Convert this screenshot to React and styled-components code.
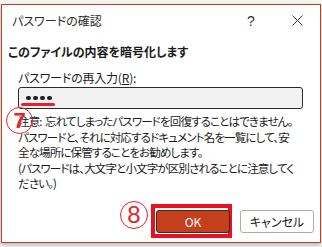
import styled, { createGlobalStyle } from "styled-components";

const Global = createGlobalStyle`
  html, body {
    margin: 0;
    padding: 0;
    background: #fff;
  }
  body {
    font-family: "Noto Sans CJK JP", "Noto Sans", sans-serif;
    font-feature-settings: "palt";
    color: #1a1a1a;
  }
`

const Page = styled.div`
  width: 322px;
  height: 247px;
  padding: 4px 0 0 1px;
  box-sizing: border-box;
  background: #f4f4f4;
`

const Dialog = styled.div`
  position: relative;
  width: 320px;
  height: 239px;
  box-sizing: border-box;
  border: 1px solid #c4401c;
  background: #fff;
  box-shadow: 0 2px 4px rgba(0,0,0,0.25);
  display: flex;
  flex-direction: column;
`

const TitleBar = styled.div`
  height: 31px;
  display: flex;
  align-items: center;
  padding-left: 10px;
  font-size: 12px;
  color: #2b2b2b;
`

const Title = styled.div`
  flex: 1;
`

const TitleBtn = styled.div`
  width: 46px;
  height: 31px;
  display: flex;
  align-items: center;
  justify-content: center;
  font-size: 14px;
  color: #333;
  font-family: "Liberation Sans", sans-serif;
`

const Content = styled.div`
  padding: 8px 6px 0 6px;
  display: flex;
  flex-direction: column;
`

const Heading = styled.div`
  font-size: 12px;
  font-weight: bold;
  line-height: 16px;
`

const Field = styled.div`
  margin: 10px 0 0 10px;
  display: flex;
  flex-direction: column;
`

const Label = styled.div`
  font-size: 12px;
  line-height: 16px;
  letter-spacing: -0.2px;
  u { text-decoration: underline; text-underline-offset: 1px; }
`

const Input = styled.div`
  position: relative;
  margin-top: 1px;
  width: 285px;
  height: 22px;
  box-sizing: border-box;
  border: 1px solid #2a2a2a;
  border-radius: 3px;
  background: #f2f2f2;
  display: flex;
  align-items: center;
  gap: 2.5px;
  padding-left: 7px;
`

const Dot = styled.span`
  width: 4.5px;
  height: 4.5px;
  border-radius: 50%;
  background: #222;
`

const Mark = styled.div`
  position: absolute;
  left: 2px;
  top: 15px;
  width: 34px;
  height: 3px;
  border-radius: 2px;
  background: #e8202a;
`

const Note = styled.div`
  margin-top: 5px;
  font-size: 11.5px;
  line-height: 15.5px;
  letter-spacing: -0.85px;
  white-space: nowrap;
`

const Circle = styled.div`
  position: ${p => (p.$float ? "absolute" : "static")};
  left: ${p => (p.$float ? "4px" : "auto")};
  top: ${p => (p.$float ? "102px" : "auto")};
  width: ${p => p.$size}px;
  height: ${p => p.$size}px;
  box-sizing: border-box;
  border: 1.2px solid #e8202a;
  border-radius: 50%;
  display: flex;
  align-items: center;
  justify-content: center;
  color: #e8202a;
  font-family: "Liberation Sans", sans-serif;
  font-size: ${p => p.$font}px;
  font-weight: ${p => (p.$float ? "bold" : "normal")};
  line-height: 1;
`

const Buttons = styled.div`
  margin-top: auto;
  padding: 0 6px 4px 0;
  display: flex;
  justify-content: flex-end;
  align-items: flex-end;
`

const Highlight = styled.div`
  width: 81px;
  height: 34px;
  box-sizing: border-box;
  border: 4px solid #e81123;
  padding: 2px 0 0 1px;
  margin: 0 8px 0 3px;
`

const Button = styled.div`
  width: ${p => p.$w}px;
  height: 23px;
  box-sizing: border-box;
  border-radius: 3px;
  border: 1px solid ${p => (p.$primary ? "#3a2a20" : "#adadad")};
  background: ${p => (p.$primary ? "#c4401c" : "#fff")};
  color: ${p => (p.$primary ? "#fff" : "#1a1a1a")};
  display: flex;
  align-items: center;
  justify-content: center;
  font-size: 12px;
  margin-bottom: ${p => (p.$primary ? "0" : "5px")};
`

export default function App() {
  return (
    <Page>
      <Global />
      <Dialog>
        <TitleBar>
          <Title>パスワードの確認</Title>
          <TitleBtn>?</TitleBtn>
          <TitleBtn>
            <svg width="11" height="11" viewBox="0 0 11 11">
              <path d="M0.5 0.5 L10.5 10.5 M10.5 0.5 L0.5 10.5" stroke="#333" strokeWidth="1" />
            </svg>
          </TitleBtn>
        </TitleBar>
        <Content>
          <Heading>このファイルの内容を暗号化します</Heading>
          <Field>
            <Label>パスワードの再入力(<u>R</u>):</Label>
            <Input>
              <Dot /><Dot /><Dot /><Dot />
              <Mark />
            </Input>
            <Note>
              注意:&nbsp; 忘れてしまったパスワードを回復することはできません。<br />
              パスワードと、それに対応するドキュメント名を一覧にして、安<br />
              全な場所に保管することをお勧めします。<br />
              (パスワードは、大文字と小文字が区別されることに注意してく<br />
              ださい。)
            </Note>
          </Field>
        </Content>
        <Circle $float $size={27} $font={22}>7</Circle>
        <Buttons>
          <Circle $size={28} $font={24} style={{ marginBottom: 9 }}>8</Circle>
          <Highlight>
            <Button $primary $w={74}>OK</Button>
          </Highlight>
          <Button $w={74}>キャンセル</Button>
        </Buttons>
      </Dialog>
    </Page>
  );
}
